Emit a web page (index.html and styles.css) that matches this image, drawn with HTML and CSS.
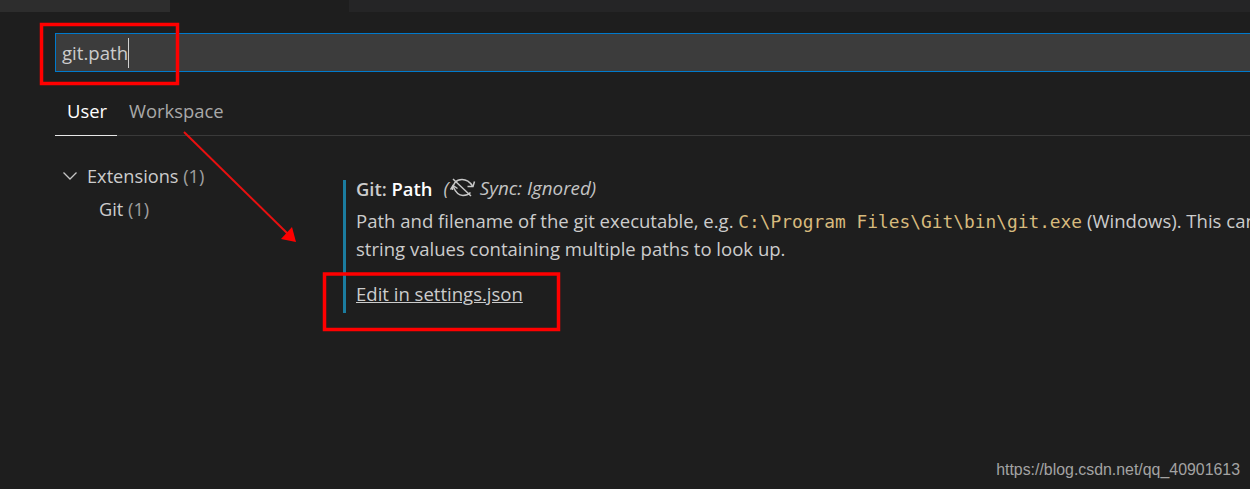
FILE: index.html
```html
<!DOCTYPE html>
<html lang="en">
<head>
    <meta charset="UTF-8">
    <meta name="viewport" content="width=device-width, initial-scale=1.0">
    <title>Settings</title>
    <link rel="stylesheet" href="styles.css">
</head>
<body>

    <!-- Editor tabs, cut off by the top of the picture -->
    <div class="editor-tabs">
        <div class="tab tab-left"></div>
        <div class="tab tab-active"></div>
        <div class="tab tab-rest"></div>
    </div>

    <div class="settings">
        <div class="search-box">
            <span class="search-text">git.path</span><span class="caret"></span>
        </div>

        <div class="scope-tabs">
            <div class="scope-tab active">User</div>
            <div class="scope-tab">Workspace</div>
        </div>

        <div class="settings-body">
            <div class="tree">
                <div class="tree-row">
                    <svg class="chevron" width="16" height="10" viewBox="0 0 16 10">
                        <path d="M1.5 1.5 L8 8 L14.5 1.5" fill="none" stroke="#c5c5c5" stroke-width="1.3"/>
                    </svg>
                    <span>Extensions <span class="count">(1)</span></span>
                </div>
                <div class="tree-row tree-child">Git <span class="count">(1)</span></div>
            </div>

            <div class="setting">
                <div class="setting-title">
                    <span class="category">Git: </span><span class="name">Path</span>
                    <span class="sync">(<svg class="sync-icon" width="26" height="20" viewBox="0 0 26 20">
                        <path d="M2.5 12 C2.5 6 6 1.5 12 1.5 C16 1.5 20 4 22.5 8" fill="none" stroke="#c8c8c8" stroke-width="1.5"/>
                        <path d="M3 8 C5 13 8 17.5 13 17.5 C16 17.5 18.5 16.5 20.5 14.5" fill="none" stroke="#c8c8c8" stroke-width="1.5"/>
                        <path d="M3 1 L21 18" fill="none" stroke="#c8c8c8" stroke-width="1.5"/>
                        <path d="M17.5 8.5 L23 8.5 L24.5 3.5" fill="none" stroke="#c8c8c8" stroke-width="1.5"/>
                        <path d="M0.5 11.5 L3 7.5 L7.5 10.5" fill="none" stroke="#c8c8c8" stroke-width="1.5"/>
                    </svg>Sync: Ignored)</span>
                </div>
                <div class="setting-desc">
                    Path and filename of the git executable, e.g. <code>C:\Program Files\Git\bin\git.exe</code> (Windows). This can<br>
                    string values containing multiple paths to look up.
                </div>
                <a class="edit-link" href="#">Edit in settings.json</a>
            </div>
        </div>
    </div>

    <!-- Red marks drawn over the screenshot -->
    <svg class="annotations" width="1250" height="489" viewBox="0 0 1250 489">
        <rect x="41.5" y="24.5" width="136" height="59" fill="none" stroke="#ff0000" stroke-width="3.5"/>
        <rect x="324.5" y="274" width="234" height="55.5" fill="none" stroke="#ff0000" stroke-width="3.5"/>
        <path d="M184 132 L288 234" fill="none" stroke="#e81010" stroke-width="2"/>
        <path d="M296 242 L281 239 L292 227 Z" fill="#ff0000"/>
    </svg>

    <div class="watermark">https://blog.csdn.net/qq_40901613</div>

</body>
</html>
```

FILE: styles.css
```css
html, body {
    height: 100%;
}

body {
    margin: 0;
    background-color: #1e1e1e;
    color: #cccccc;
    font-family: "Open Sans", sans-serif;
    font-size: 18.4px;
    overflow: hidden;
    position: relative;
}

/* Editor tabs */
.editor-tabs {
    display: flex;
    height: 12px;
}

.tab-left {
    width: 170px;
    background-color: #2d2d2d;
}

.tab-active {
    width: 179px;
    background-color: #1e1e1e;
}

.tab-rest {
    flex: 1;
    background-color: #252526;
}

/* Settings editor */
.settings {
    padding: 21px 0 0 55px;
}

.search-box {
    display: flex;
    align-items: center;
    height: 37px;
    padding-left: 6px;
    background-color: #3c3c3c;
    border: 1px solid #007acc;
    border-right: none;
    font-size: 18.6px;
}

.search-text {
    color: #cccccc;
}

.caret {
    width: 1px;
    height: 30px;
    background-color: #d0d0d0;
}

.scope-tabs {
    display: flex;
    height: 63px;
    border-bottom: 1px solid #3a3a3a;
}

.scope-tab {
    padding: 26px 12px 0;
    color: #a9a9a9;
}

.scope-tab.active {
    padding-right: 10px;
    color: #ffffff;
    border-bottom: 1px solid #e7e7e7;
    margin-bottom: -1px;
}

.settings-body {
    display: flex;
}

.tree {
    width: 288px;
    flex-shrink: 0;
    padding-top: 23px;
    font-size: 18.2px;
}

.tree-row {
    display: flex;
    align-items: center;
    gap: 9px;
    height: 33px;
    padding-left: 7px;
    white-space: nowrap;
}

.tree-child {
    display: block;
    margin-top: 1px;
    padding-left: 44px;
    line-height: 33px;
}

.chevron {
    flex-shrink: 0;
}

.count {
    color: #a0a0a0;
}

.setting {
    margin-top: 44px;
    height: 133px;
    padding-left: 10px;
    border-left: 3px solid #1b7c9f;
    white-space: nowrap;
    font-size: 18.55px;
}

.setting-title {
    display: flex;
    align-items: center;
    height: 16px;
    font-size: 18.4px;
}

.category {
    font-weight: 600;
    white-space: pre;
}

.name {
    font-weight: 600;
    color: #ffffff;
}

.sync {
    margin-left: 11px;
    font-style: italic;
    display: inline-flex;
    align-items: center;
    color: #c4c4c4;
    font-size: 18.8px;
}

.sync-icon {
    margin: 0 4px 0 1px;
}

.setting-desc {
    margin-top: 11px;
    line-height: 28px;
}

code {
    font-family: "DejaVu Sans Mono", monospace;
    font-size: 17.85px;
    line-height: 1;
    color: #d7ba7d;
}

.edit-link {
    display: inline-block;
    margin-top: 18px;
    color: #cccccc;
}

/* Overlays */
.annotations {
    position: absolute;
    top: 0;
    left: 0;
}

.watermark {
    position: absolute;
    right: 10px;
    bottom: 10px;
    font-family: "Liberation Sans", sans-serif;
    font-size: 15.9px;
    color: #a3a3a3;
}
```
